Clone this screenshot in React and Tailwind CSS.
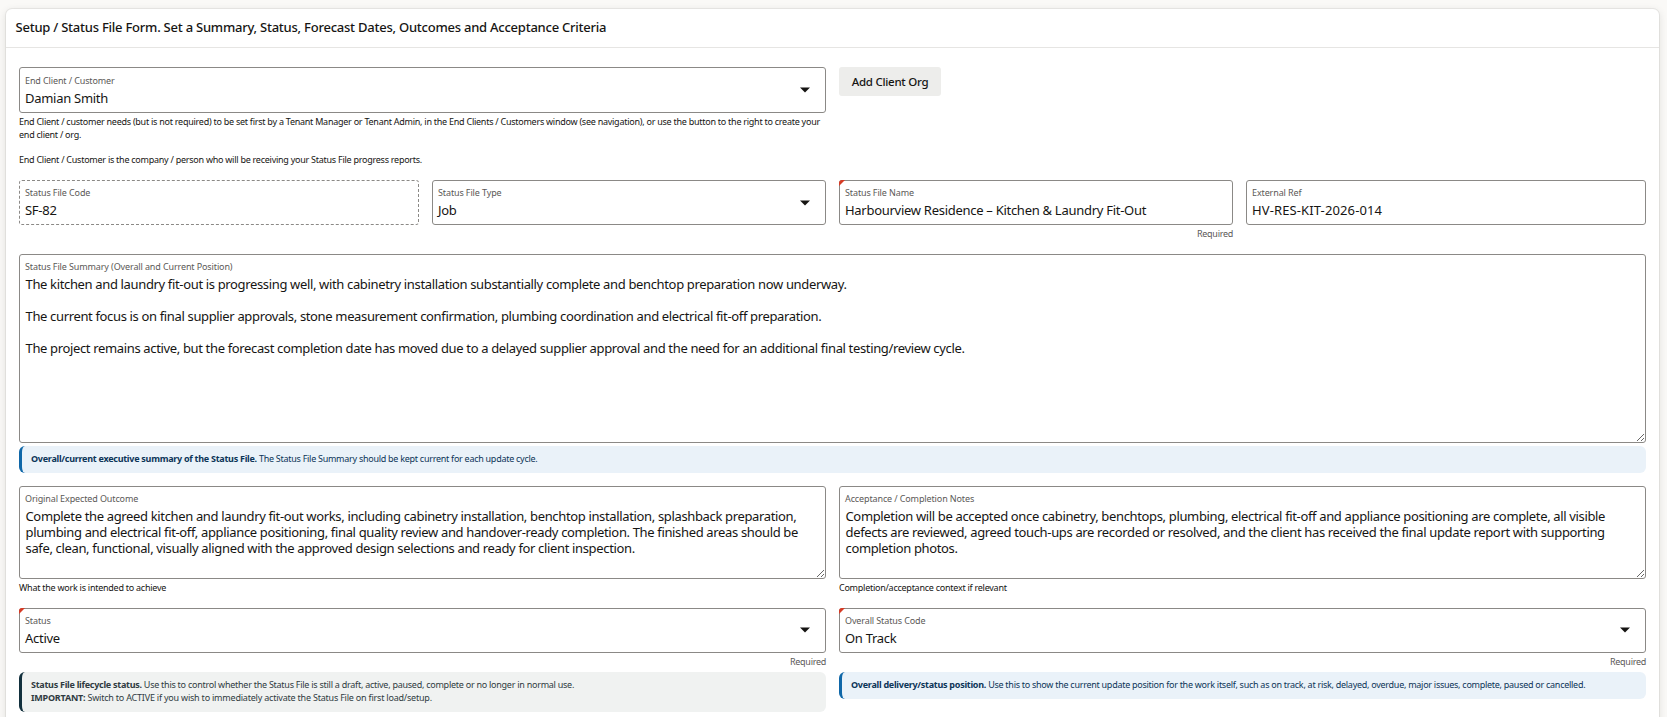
import clsx from 'clsx';

const summary = `The kitchen and laundry fit-out is progressing well, with cabinetry installation substantially complete and benchtop preparation now underway.

The current focus is on final supplier approvals, stone measurement confirmation, plumbing coordination and electrical fit-off preparation.

The project remains active, but the forecast completion date has moved due to a delayed supplier approval and the need for an additional final testing/review cycle.`;

const outcome =
  'Complete the agreed kitchen and laundry fit-out works, including cabinetry installation, benchtop installation, splashback preparation, plumbing and electrical fit-off, appliance positioning, final quality review and handover-ready completion. The finished areas should be safe, clean, functional, visually aligned with the approved design selections and ready for client inspection.';

const acceptance =
  'Completion will be accepted once cabinetry, benchtops, plumbing, electrical fit-off and appliance positioning are complete, all visible defects are reviewed, agreed touch-ups are recorded or resolved, and the client has received the final update report with supporting completion photos.';

const RequiredCorner = () => (
  <svg className="absolute -top-px -left-px" width="7" height="7" viewBox="0 0 7 7">
    <path d="M0 6V3a3 3 0 0 1 3-3h3z" fill="#d63b25" />
  </svg>
);

const Caret = ({ className }) => (
  <svg className={clsx('absolute right-[15px]', className)} width="10" height="6" viewBox="0 0 10 6">
    <path d="M0 0.5h10L5 5.5z" fill="#161513" />
  </svg>
);

const Label = ({ children }) => (
  <span className="block h-3 text-[9px] leading-3 tracking-[-0.12px] text-[#5b5957]">{children}</span>
);

const Field = ({ label, value, select, required, readOnly, tall }) => (
  <div
    className={clsx(
      'relative rounded-[3px] border border-[#8b8986] px-[5px]',
      tall ? 'h-[46px] pt-[7px]' : 'h-[45px] pt-[6px]',
      readOnly && 'border-dashed',
    )}
  >
    {required && <RequiredCorner />}
    <Label>{label}</Label>
    <span className="mt-[3px] block text-[13px] leading-4 tracking-[-0.28px]">{value}</span>
    {select && <Caret className={required ? 'top-[18px]' : 'top-[19px]'} />}
  </div>
);

const Area = ({ label, value, className }) => (
  <div className={clsx('flex flex-col rounded-[3px] border border-[#8b8986] pt-[6px]', className)}>
    <div className="px-[5px]">
      <Label>{label}</Label>
    </div>
    <textarea
      defaultValue={value}
      spellCheck={false}
      className="block w-full flex-1 resize overflow-hidden px-[5.5px] pt-[3px] text-[13px] leading-4 tracking-[-0.35px] outline-none"
    />
  </div>
);

const Help = ({ children }) => (
  <p className="pt-[3px] text-[9px] leading-[12.67px] tracking-[-0.255px]">{children}</p>
);

const Required = () => (
  <p className="pt-[3px] text-right text-[9px] leading-3 tracking-[-0.28px] text-[#5b5957]">Required</p>
);

const Note = ({ tone, className, children }) => (
  <div
    className={clsx(
      'rounded-[6px] border-l-3 pt-[6px] pb-2 pl-[9px] text-[9px] leading-[13px] tracking-[-0.27px]',
      tone === 'info' ? 'border-[#0f67a8] bg-[#eaf2f9] text-[#0c3558]' : 'border-[#12303d] bg-[#f0f2f1] text-[#2f3b41]',
      className,
    )}
  >
    {children}
  </div>
);

export default function App() {
  return (
    <div className="h-[717px] overflow-hidden bg-[#faf9f7] pl-[6px] pr-[8px] pt-[9px] font-['Noto_Sans',sans-serif] text-[#161513]">
      <div className="h-[760px] rounded-md bg-white shadow-[0_0_0_1px_rgba(22,21,19,0.06),0_2px_8px_rgba(22,21,19,0.12)]">
        <h1 className="flex h-[39px] items-center border-b border-[#e6e5e3] pl-[9.5px] text-[13px] font-medium tracking-[-0.235px]">
          Setup / Status File Form. Set a Summary, Status, Forecast Dates, Outcomes and Acceptance Criteria
        </h1>

        <div className="flex flex-col pl-[13px] pr-[7px] pt-[19px]">
          <div className="flex h-[113px] items-start gap-[13px]">
            <div className="w-[807px]">
              <Field label="End Client / Customer" value="Damian Smith" select tall />
              <Help>
                End Client / customer needs (but is not required) to be set first by a Tenant Manager or Tenant Admin, in the End
                Clients / Customers window (see navigation), or use the button to the right to create your
                <br />
                end client / org.
                <br />
                <br />
                End Client / Customer is the company / person who will be receiving your Status File progress reports.
              </Help>
            </div>
            <button className="h-[29px] w-[102px] rounded-[3px] bg-[#ededeb] pt-px text-[11.5px] font-medium tracking-[-0.28px]">
              Add Client Org
            </button>
          </div>

          <div className="grid h-[74px] grid-cols-[400px_394px_394px_400px] items-start gap-[13px]">
            <Field label="Status File Code" value="SF-82" readOnly />
            <Field label="Status File Type" value="Job" select />
            <div>
              <Field label="Status File Name" value="Harbourview Residence – Kitchen & Laundry Fit-Out" required />
              <Required />
            </div>
            <Field label="External Ref" value={<span className="tracking-[0.12px]">HV-RES-KIT-2026-014</span>} />
          </div>

          <div className="h-[232px] w-[1627px]">
            <Area label="Status File Summary (Overall and Current Position)" value={summary} className="h-[189px]" />
            <Note tone="info" className="mt-[3px]">
              <b>Overall/current executive summary of the Status File.</b> The Status File Summary should be kept current for each
              update cycle.
            </Note>
          </div>

          <div className="flex h-[122px] gap-[13px]">
            <div className="w-[807px]">
              <Area label="Original Expected Outcome" value={outcome} className="h-[93px]" />
              <Help>What the work is intended to achieve</Help>
            </div>
            <div className="w-[807px]">
              <Area label="Acceptance / Completion Notes" value={acceptance} className="h-[93px]" />
              <Help>Completion/acceptance context if relevant</Help>
            </div>
          </div>

          <div className="flex items-start gap-[13px]">
            <div className="w-[807px]">
              <Field label="Status" value="Active" select required />
              <Required />
              <Note className="mt-1">
                <b>Status File lifecycle status.</b>{' '}
                <span className="tracking-[-0.255px]">
                  Use this to control whether the Status File is still a draft, active, paused, complete or no longer in normal use.
                </span>
                <br />
                <span className="tracking-[-0.21px]">
                  <b>IMPORTANT:</b> Switch to ACTIVE if you wish to immediately activate the Status File on first load/setup.
                </span>
              </Note>
            </div>
            <div className="w-[807px]">
              <Field label="Overall Status Code" value="On Track" select required />
              <Required />
              <Note tone="info" className="mt-1">
                <b>Overall delivery/status position.</b> Use this to show the current update position for the work itself, such as on
                track, at risk, delayed, overdue, major issues, complete, paused or cancelled.
              </Note>
            </div>
          </div>
        </div>
      </div>
    </div>
  );
}
